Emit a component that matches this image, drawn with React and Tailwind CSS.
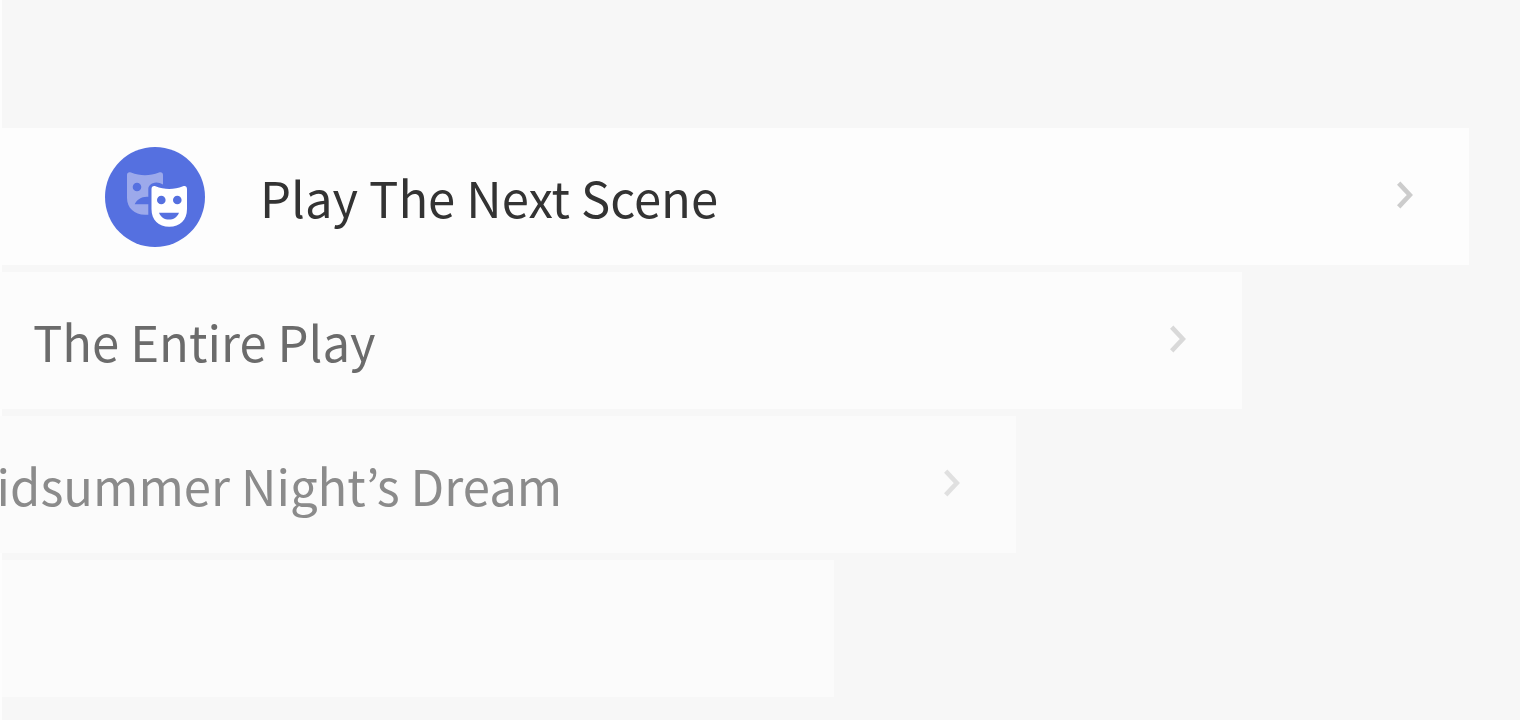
import React from "react";

function MasksIcon() {
  return (
    <svg viewBox="0 0 100 100" className="size-[100px] shrink-0" aria-hidden="true">
      <circle cx="50" cy="50" r="50" fill="#5570e0" />
      <path
        fill="#9ca9eb"
        fillRule="evenodd"
        d="M22 28C22 25.6 24 24.6 26 25.6C35.5 29.2 44.5 29.2 54 25.6C56.2 24.6 58 25.6 58 28V37.6C53.5 34.6 48 34.8 44.8 38.3C43.700 39.500 43.300 40.600 43.300 42V49.700C36.500 49.200 31.800 52.500 29.700 57.300H43.300V67.700H40C29.500 67.700 22 61 22 51ZM32 35.700A4.300 4.300 0 1 0 32 44.300A4.300 4.300 0 1 0 32 35.700Z"
      />
      <path
        fill="#ffffff"
        fillRule="evenodd"
        d="M46.500 42C46.500 39.500 48.300 38.500 50.500 39.300C59.500 43 69 43 78 39.300C80.200 38.500 82 39.500 82 42V62C82 73 75 79.700 64.300 79.700C53.500 79.700 46.500 73 46.500 62ZM56.300 48.700A4.300 4.300 0 1 0 56.300 57.300A4.300 4.300 0 1 0 56.300 48.700ZM72.300 48.700A4.300 4.300 0 1 0 72.300 57.300A4.300 4.300 0 1 0 72.300 48.700ZM54 65.700C56 70.500 59.500 72.600 64 72.600C68.500 72.600 72 70.500 74 65.700Z"
      />
    </svg>
  );
}

function Chevron() {
  return (
    <svg viewBox="0 0 16 28" className="mb-1 h-7 w-4 shrink-0" fill="none" stroke="currentColor" strokeWidth="4.6" aria-hidden="true">
      <path d="M1.700 2.200L12.800 14L1.700 25.800" />
    </svg>
  );
}

const rows = [
  { label: "Play The Next Scene", row: "mr-[51px] bg-[#fdfdfd]", text: "text-[#333333]", arrow: "text-[#cccccc]" },
  { label: "The Entire Play", row: "-ml-[227px] mr-[278px] bg-[#fcfcfc]", text: "text-[#6b6b6b]", arrow: "text-[#d9d9d9]" },
  { label: "Play A Midsummer Night’s Dream", row: "-ml-[453px] mr-[504px] bg-[#fbfbfb]", text: "text-[#8b8b8b]", arrow: "text-[#e0e0e0]" },
];

export default function App() {
  return (
    <main className="flex min-h-screen overflow-hidden bg-[#f7f7f7] font-['Noto_Sans_CJK_KR',sans-serif]">
      <div className="w-[2px] shrink-0 bg-[#fdfdfd]" />
      <ul className="flex min-w-0 flex-1 flex-col gap-[7px] pt-32">
        {rows.map((r) => (
          <li key={r.label} className={`flex h-[137px] ${r.row}`}>
            <button type="button" className="flex min-w-0 flex-1 items-center pr-14 pl-[103px] text-left">
              <MasksIcon />
              <span className={`ml-[55px] flex-1 text-[49px] leading-[72px] whitespace-nowrap ${r.text}`}>{r.label}</span>
              <span className={r.arrow}>
                <Chevron />
              </span>
            </button>
          </li>
        ))}
        <li className="mr-[686px] h-[137px] bg-[#fbfbfb]" />
      </ul>
    </main>
  );
}
